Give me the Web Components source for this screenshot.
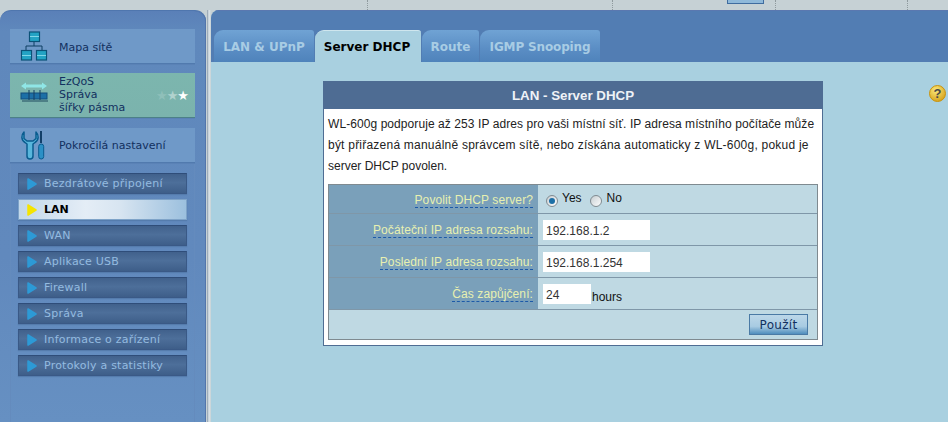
<!DOCTYPE html>
<html lang="cs"><head><meta charset="utf-8"><title>LAN - Server DHCP</title>
<style>
html,body{margin:0;padding:0;width:948px;height:422px;overflow:hidden;background:#c6d1d5}
body{font-family:"Liberation Sans",Arial,sans-serif}
</style></head><body>
<rt-app></rt-app>
<template id="t-app">
<style>
:host{display:block;width:948px;height:422px;overflow:hidden}
.top{height:10px;display:flex;position:relative}
.dot{position:absolute;top:0;height:10px;width:0;border-left:1px dotted #8f9a9e}
.box{position:absolute;left:727px;top:0;width:35px;height:3px;background:#8fb9da;border:1px solid #3f6c9f;border-top:0}
.cols{display:flex;height:412px}
.gap{width:5px;background:linear-gradient(90deg,#c6d1d5 0,#c6d1d5 1px,#8a9aaa 1px,#dce5ea 3px,#c6d1d5 5px)}
</style>
<div class="top"><i class="dot" style="left:367px"></i><i class="dot" style="left:612px"></i><i class="dot" style="left:775px"></i><i class="dot" style="left:907px"></i><i class="box"></i></div>
<div class="cols"><rt-sidebar></rt-sidebar><div class="gap"></div><rt-main></rt-main></div>
</template>
<template id="t-sidebar">
<style>
:host{display:block;width:206px;height:412px;box-sizing:border-box;background:linear-gradient(180deg,#5a80b8 0,#5f88bc 20px,#6189bd 60%,#6690c2 100%);border-radius:11px 11px 0 0;padding:18px 0 0 0;border-top:1px solid #4f76ae;box-shadow:inset -1px 0 0 #5275ab;overflow:hidden}
.rail{margin:0 11px 0 10px;width:185px;display:flex;flex-direction:column}
.sub{padding:9px 0 0 7px;display:flex;flex-direction:column;gap:5px;border-left:1px solid #648bbd;border-right:1px solid #648bbd;height:300px;width:185px;box-sizing:border-box}
</style>
<div class="rail">
<rt-tile label="Mapa sítě" style="margin-bottom:10px;--tx:2px"><svg width="28" height="30" viewBox="0 0 28 30"><path d="M14 10v5M6 20v-5h16v5" fill="none" stroke="#0f3f63" stroke-width="1"/><g fill="#23a3c4" stroke="#0b5277" stroke-width="1.2"><rect x="9.5" y="1" width="10" height="9.5"/><rect x="1.5" y="19.5" width="10" height="9.5"/><rect x="16.5" y="19.5" width="10" height="9.5"/></g><path d="M10 5.5h9M2 24.500h9M17 24.500h9" stroke="#7fd6e8" stroke-width="1"/></svg></rt-tile>
<rt-tile label="EzQoS&#10;Správa&#10;šířky pásma" active stars style="margin-bottom:11px"><svg width="28" height="30" viewBox="0 0 28 30"><path d="M1 6l5-3.500v2h16v-2l5 3.500-5 3.500v-2H6v2z" fill="#8fe6e6"/><rect x="1" y="13" width="26" height="6" fill="#1c6fa6" stroke="#124f7e"/><path d="M9 10v12M14 10v12M20 10v12" stroke="#153f63"/><rect x="2" y="20" width="26" height="2" fill="#4d7f86"/></svg></rt-tile>
<rt-tile label="Pokročilá nastavení" style="margin-bottom:10px"><svg width="28" height="30" viewBox="0 0 28 30"><path d="M4 2C1 5 1 10 5 12.500L7 14V26a3 3 0 0 0 6 0V14l2-1.500C19 10 19 5 16 2v6.500l-3 2.500H7L4 8.500z" fill="#58b6dc" stroke="#0a5c8f" stroke-width="1.500" stroke-linejoin="round"/><path d="M20 1h2v12h-2z" fill="#123f68"/><rect x="18.700" y="14" width="5" height="15" rx="2.500" fill="#2b90c6" stroke="#0a5c8f"/></svg></rt-tile>
<div class="sub" style="margin-top:-8px">
<rt-sub>Bezdrátové připojení</rt-sub><rt-sub current>LAN</rt-sub><rt-sub>WAN</rt-sub><rt-sub>Aplikace USB</rt-sub><rt-sub>Firewall</rt-sub><rt-sub>Správa</rt-sub><rt-sub>Informace o zařízení</rt-sub><rt-sub>Protokoly a statistiky</rt-sub>
</div></div>
</template>
<template id="t-tile">
<style>
:host{display:flex;align-items:center;height:34px;width:185px;background:#6f99c8;box-shadow:0 1px 0 #517aae,0 2px 0 #5a82b6;font:11px "DejaVu Sans",Verdana,sans-serif;color:#12305f;position:relative}
:host([active]){height:44px;background:linear-gradient(180deg,#7cb6ae,#7bb3ad);box-shadow:0 1px 0 #4c8088,0 2px 0 #5a82b6}
:host([active]) .tx{margin-bottom:2px}
.ic{width:28px;height:30px;margin-left:10px;flex:none}
.tx{margin-left:11px;white-space:pre-line;line-height:13px;padding-top:var(--tx,0)}
.st{position:absolute;left:146px;top:16px;font:13px/13px "DejaVu Sans",sans-serif;letter-spacing:-1px;color:#fff;white-space:nowrap}
.st i{font-style:normal}
</style>
<div class="ic"><slot></slot></div><div class="tx"></div>
</template>
<template id="t-sub">
<style>
:host{display:flex;align-items:center;box-sizing:border-box;width:169px;height:21px;background:linear-gradient(180deg,#41618c,#4d6f9a 45%,#3e5e89);border:1px solid #3a5986;border-top-color:#2f4d79;box-shadow:0 1px 1px #557cad;font:11px "DejaVu Sans",Verdana,sans-serif;color:#94bbe0;letter-spacing:.22px}
:host([current]){background:linear-gradient(90deg,#c3d8ea 0,#e4edf6 40%,#d8e5f1 60%,#9cc0de 100%);border-color:#7ea3c8;color:#000;font-weight:bold;letter-spacing:0}
svg{margin:0 7px 0 8px;flex:none}
path{stroke-linejoin:round}
:host([current]) path{fill:#f5e400;stroke:#f5e400}
</style>
<svg width="10" height="12" viewBox="0 0 10 12"><path d="M1 1l8 5-8 5z" fill="#2d9ad6" stroke="#2d9ad6" stroke-width="1.500"/></svg><slot></slot>
</template>
<template id="t-main">
<style>
:host{display:block;width:737px;height:412px;background:#a9d0e0;border-radius:8px 0 0 0;position:relative;overflow:hidden}
.head{height:52px;box-sizing:border-box;padding:20px 0 0 3px;display:flex;gap:1px;background:#527db3;border-top:1px solid #5a78b0;align-items:flex-end}
.body{padding:19px 0 0 112px}
.help{position:absolute;left:718px;top:75px}
</style>
<div class="head"><rt-tab style="width:100px">LAN &amp; UPnP</rt-tab><rt-tab current style="width:106px;padding-right:2px">Server DHCP</rt-tab><rt-tab style="width:57px">Route</rt-tab><rt-tab style="width:120px;letter-spacing:-.15px">IGMP Snooping</rt-tab></div>
<div class="body"><rt-card></rt-card></div>
<svg class="help" width="17" height="17" viewBox="0 0 17 17"><defs><radialGradient id="g" cx=".4" cy=".3" r=".8"><stop offset="0" stop-color="#fbe97a"/><stop offset="1" stop-color="#d19a12"/></radialGradient></defs><circle cx="8.500" cy="8.500" r="8" fill="url(#g)" stroke="#c8930f"/><text x="8.500" y="13" text-anchor="middle" font-family="Liberation Sans" font-weight="bold" font-size="13" fill="#4a4a48">?</text></svg>
</template>
<template id="t-tab">
<style>
:host{display:flex;align-items:center;justify-content:center;box-sizing:border-box;height:32px;background:linear-gradient(180deg,#70a3d4,#5a8dc4 60%,#4f83bb);border-radius:9px 3px 0 0;font:bold 12px "DejaVu Sans",Verdana,sans-serif;color:#a8cce4;white-space:nowrap;padding-top:1px}
:host([current]){background:#a9d0e0;color:#000;border-top:1px solid #cfe6ee}
</style><slot></slot>
</template>
<template id="t-card">
<style>
:host{display:block;width:500px;height:265px;box-sizing:border-box;background:#fff;border:1px solid #4f6d93;border-top:0;font:12px "Liberation Sans",Arial,sans-serif;color:#222}
h1{margin:0 -1px;height:28px;background:#4e6c93;color:#eef2f7;font:bold 13.33px/30px "Liberation Sans",Arial,sans-serif;text-align:center}
.p{padding:5px 0 0 4px;line-height:21px;height:70px;box-sizing:border-box;white-space:nowrap}
.p span{display:block}
.tb{margin:5px 0 0 4px;width:490px;height:156px;box-sizing:border-box;border:1px solid #7f8a90;background:#bfd9e3;display:flex;flex-direction:column}
.foot{flex:1;display:flex;justify-content:flex-end;align-items:center;padding:0 9px 0 0}
button{width:59px;height:21px;padding:0;font:12px "DejaVu Sans",Verdana,sans-serif;color:#12305f;background:linear-gradient(180deg,#bcd7e8,#a8cbe2 60%,#4f8dbd);border:1px solid #4a7aa5;letter-spacing:.3px}
</style>
<h1>LAN - Server DHCP</h1>
<div class="p"><span style="letter-spacing:.075px">WL-600g podporuje až 253 IP adres pro vaši místní síť. IP adresa místního počítače může</span><span style="letter-spacing:.225px">být přiřazená manuálně správcem sítě, nebo získána automaticky z WL-600g, pokud je</span><span>server DHCP povolen.</span></div>
<div class="tb">
<rt-row label="Povolit DHCP server?" h="29"><rt-radio on>Yes</rt-radio><rt-radio>No</rt-radio></rt-row>
<rt-row label="Počáteční IP adresa rozsahu:" h="32"><rt-field value="192.168.1.2" w="107"></rt-field></rt-row>
<rt-row label="Poslední IP adresa rozsahu:" h="32"><rt-field value="192.168.1.254" w="107"></rt-field></rt-row>
<rt-row label="Čas zapůjčení:" h="32"><rt-field value="24" w="48"></rt-field><span style="margin-left:1px;padding-top:6px">hours</span></rt-row>
<div class="foot"><button>Použít</button></div>
</div>
</template>
<template id="t-row">
<style>
:host{display:flex;font:12px "Liberation Sans",Arial,sans-serif;color:#111;border-bottom:1px solid #7f97a8;box-sizing:border-box}
.l{width:209px;flex:none;background:#7aa0ba;display:flex;justify-content:flex-end;align-items:center;padding:3px 5px 0 0;box-sizing:border-box;color:#e8f0b0;font-size:12px;letter-spacing:.1px}
.l span{border-bottom:1px dashed #1c5aa8;line-height:13px}
.v{flex:1;display:flex;align-items:center;padding-left:5px;background:#bfd9e3}
</style>
<div class="l"><span></span></div><div class="v"><slot></slot></div>
</template>
<template id="t-field">
<style>
:host{display:block;box-sizing:border-box;height:20px;background:#fff;font:12px/22px "Liberation Sans",Arial,sans-serif;color:#333;padding-left:3px;margin-top:1px}
</style><span></span>
</template>
<template id="t-radio">
<style>
:host{display:inline-flex;align-items:center;margin-right:5px;font:12px "Liberation Sans",Arial,sans-serif;color:#111}
svg{margin:3px 4px 0 3px}
span{margin-top:-3px}
:host(:not([on])) span{margin-left:1px}
</style>
<svg width="12" height="12" viewBox="0 0 12 12"><defs><linearGradient id="r" x1="0" y1="0" x2="1" y2="1"><stop offset="0" stop-color="#c5ccd0"/><stop offset="1" stop-color="#fff"/></linearGradient></defs><circle cx="6" cy="6" r="5.500" fill="url(#r)" stroke="#7f8a90"/><circle class="d" cx="6" cy="6" r="3" fill="#1c6fa6"/></svg><span><slot></slot></span>
</template>
<script>
function mk(name,tid,init){customElements.define(name,class extends HTMLElement{constructor(){super();this.attachShadow({mode:"open"}).appendChild(document.getElementById(tid).content.cloneNode(true));}connectedCallback(){if(init)init.call(this,this.shadowRoot);}});}
mk("rt-app","t-app");mk("rt-sidebar","t-sidebar");mk("rt-main","t-main");mk("rt-tab","t-tab");mk("rt-card","t-card");mk("rt-sub","t-sub");
mk("rt-tile","t-tile",function(s){s.querySelector(".tx").textContent=this.getAttribute("label");if(this.hasAttribute("stars")){const d=document.createElement("div");d.className="st";d.innerHTML='<i style="opacity:.15">★</i><i style="opacity:.4">★</i><i>★</i>';s.appendChild(d);}});
mk("rt-row","t-row",function(s){s.querySelector(".l span").textContent=this.getAttribute("label");this.style.height=this.getAttribute("h")+"px";});
mk("rt-field","t-field",function(s){s.querySelector("span").textContent=this.getAttribute("value");this.style.width=this.getAttribute("w")+"px";});
mk("rt-radio","t-radio",function(s){if(!this.hasAttribute("on"))s.querySelector(".d").remove();});
</script>
</body></html>
